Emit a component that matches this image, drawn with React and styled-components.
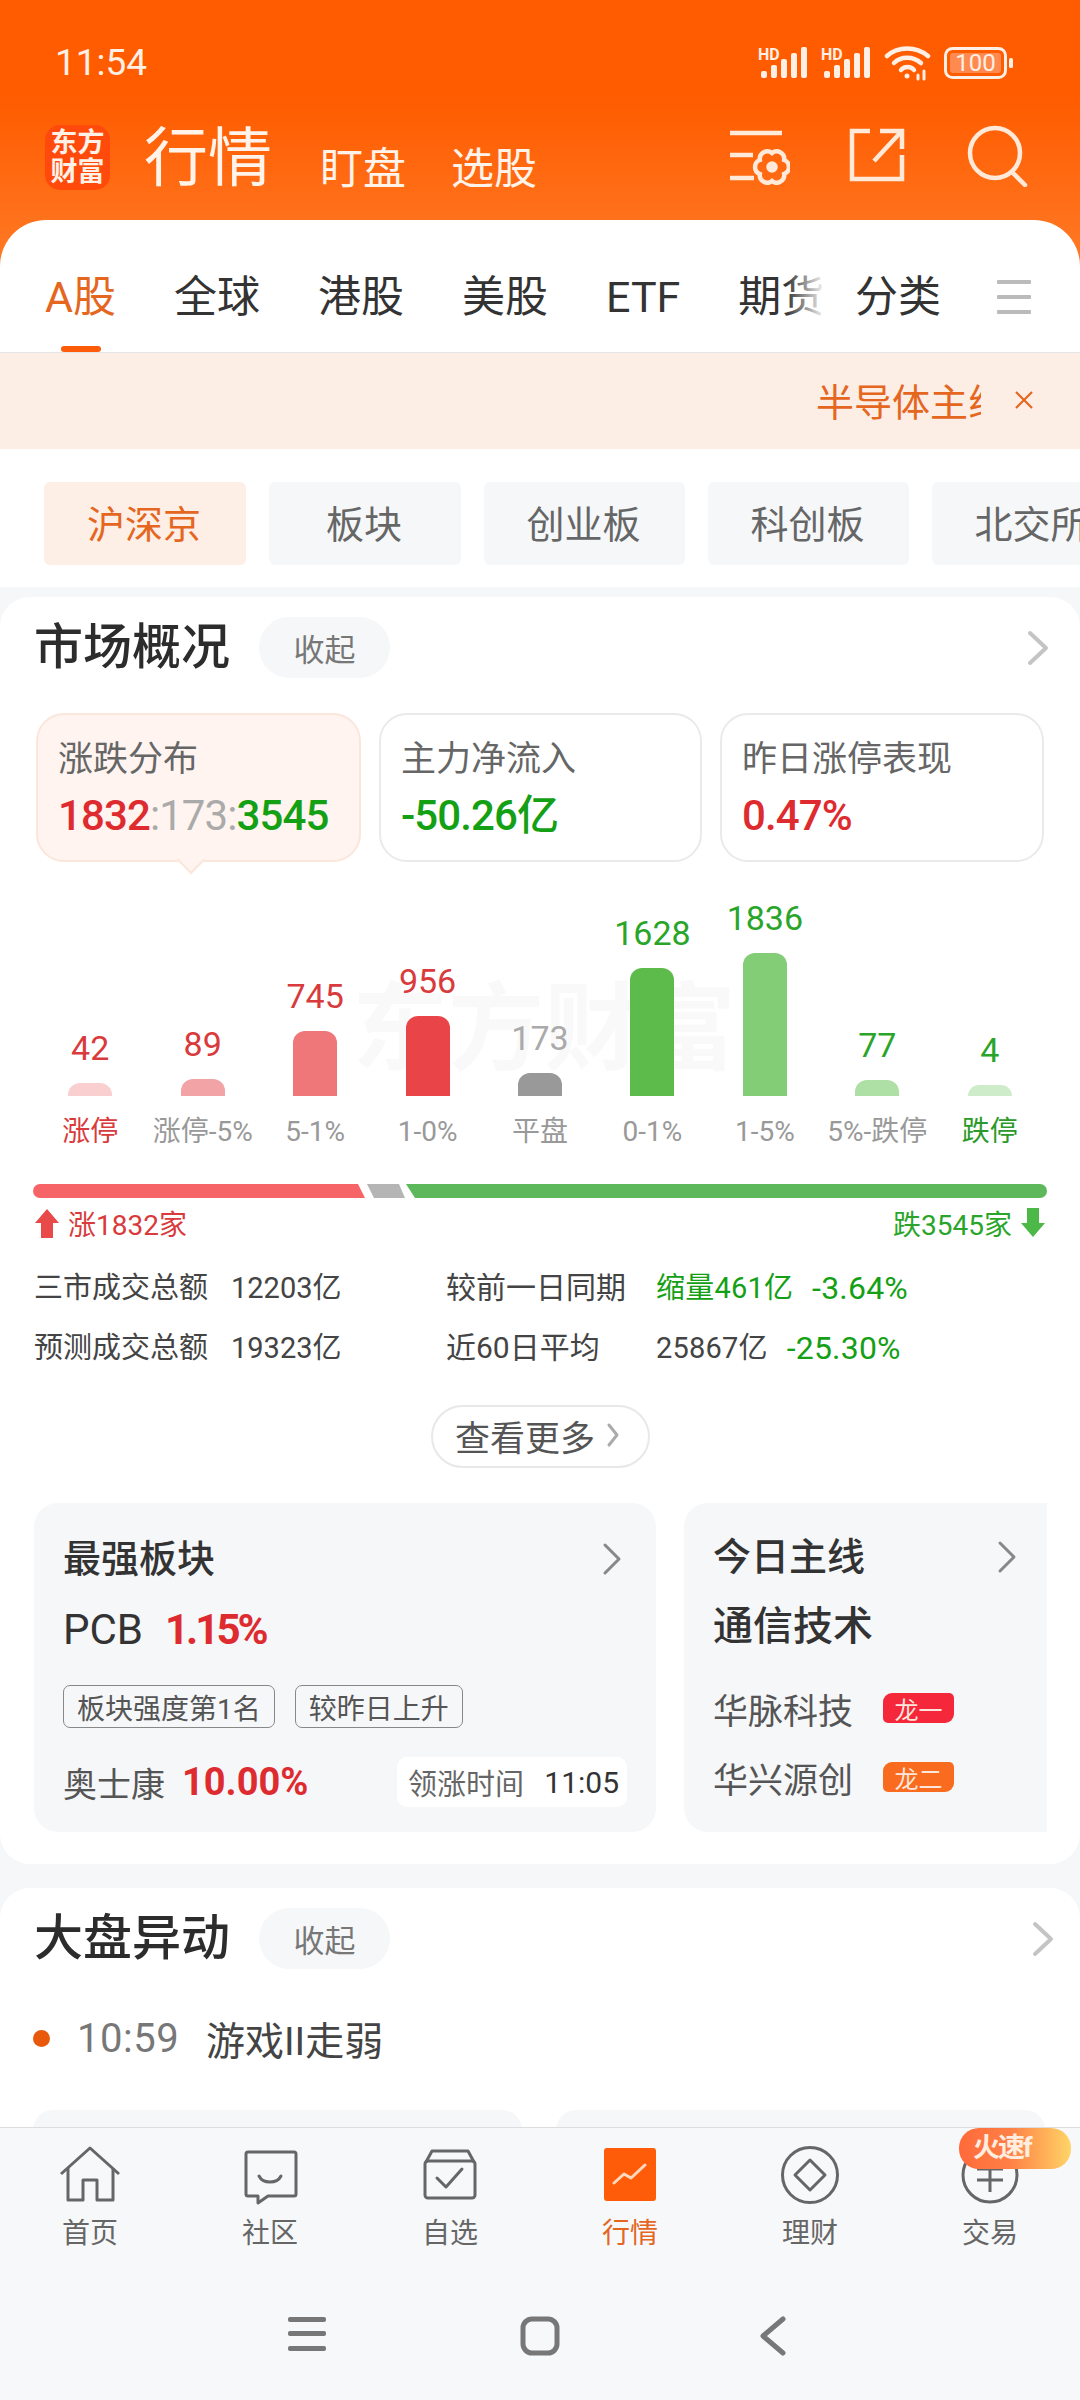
import React from "react";
import styled, { createGlobalStyle } from "styled-components";

const Global = createGlobalStyle`
  html, body { margin: 0; padding: 0; background: #F6F7F9; }
  * { box-sizing: border-box; }
  body { font-family: Roboto, "Noto Sans CJK SC", "Noto Sans", sans-serif; color: #333; }
`;

const RED = "#DE2B2F";
const GREEN = "#14A014";
const ORANGE = "#E4661F";

const Screen = styled.div`
  width: 1080px; height: 2400px; overflow: hidden; display: flex; flex-direction: column;
  background: linear-gradient(#FF5B00 0, #FF5C00 100px, #FF7520 240px, #FF7A26 300px) no-repeat;
  background-size: 100% 300px; background-color: #F6F7F9;
`;
const Main = styled.main`flex: 1; min-height: 0; overflow: hidden;`;

const StatusBar = styled.div`height: 125px; display: flex; align-items: center; justify-content: space-between; padding: 0 66px 0 55px; color: #FFEFE4;`;
const Clock = styled.span`font-size: 37px; font-weight: 400;`;
const StatusIcons = styled.div`display: flex; align-items: center; gap: 12px;`;

const HeaderBar = styled.header`height: 95px; display: flex; align-items: flex-start; padding-left: 45px; color: #FFF3EA;`;
const Logo = styled.div`
  width: 65px; height: 65px; border-radius: 15px; background: #FF4A0C; color: #FFF1E6;
  display: flex; align-items: center; justify-content: center; text-align: center;
  font-size: 27px; line-height: 29px; font-weight: 700; margin-right: 34px;
`;
const PageTitle = styled.h1`margin: 0 48px 0 0; font-size: 64px; line-height: 68px; font-weight: 400;`;
const HeaderLink = styled.span`font-size: 43px; line-height: 48px; margin: 20px 45px 0 0;`;
const HeaderIcons = styled.div`margin-left: auto; display: flex; gap: 56px; padding-right: 50px;`;
const SearchGap = styled.div`margin-left: 4px; display: flex;`;

const TabPanel = styled.section`height: 133px; background: #fff; border-radius: 46px 46px 0 0; border-bottom: 1px solid #E6E6E6; display: flex; align-items: stretch; padding-left: 45px; overflow: hidden;`;
const TabScroller = styled.div`width: 781px; flex: none; display: flex; gap: 58px; overflow: hidden; position: relative;
  &::after { content: ""; position: absolute; right: 0; top: 0; bottom: 0; width: 40px; background: linear-gradient(90deg, rgba(255,255,255,0), #fff); }
`;
const Tab = styled.div`
  flex: none; position: relative; padding-top: 22px; display: flex; align-items: center; font-size: 43px; line-height: 50px;
  color: ${p => (p.$active ? ORANGE : "#333")};
  ${p => p.$active && `&::after { content: ""; position: absolute; left: 16px; right: 15px; bottom: 0; height: 6px; background: #FF5C0A; border-radius: 3px; }`}
`;
const TabExtra = styled(Tab)`margin-left: 29px;`;
const TabMenu = styled.div`margin-left: 56px; padding-top: 22px; display: flex; align-items: center;`;

const Banner = styled.div`height: 96px; background: #FCEDE5; display: flex; align-items: center; justify-content: flex-end; padding: 0 46px 3px 0; gap: 33px;`;
const BannerText = styled.div`width: 165px; overflow: hidden; white-space: nowrap; font-size: 38px; color: ${ORANGE};`;

const ChipRow = styled.div`background: #fff; display: flex; gap: 23px; padding: 33px 0 22px 44px; overflow: hidden;`;
const Chip = styled.div`
  flex: none; width: ${p => p.$w}px; height: 83px; border-radius: 6px; display: flex; align-items: center; justify-content: center; padding: 0 2px 4px 0;
  font-size: 38px; background: ${p => (p.$active ? "#FDEEE6" : "#F6F7F9")}; color: ${p => (p.$active ? ORANGE : "#666")};
`;

const Card = styled.section`background: #fff; border-radius: 30px; margin-top: ${p => p.$mt}px; padding-bottom: ${p => p.$pb || 0}px;`;
const SectionHead = styled.div`display: flex; align-items: center; height: 61px; padding: 0 ${p => p.$pr}px 0 34px;`;
const CardTop = styled.div`padding-top: 20px;`;
const SectionTitle = styled.h2`margin: 0 29px 0 0; font-size: 49px; line-height: 61px; font-weight: 500; color: #2C2C2C;`;
const Pill = styled.span`width: 131px; height: 61px; border-radius: 31px; background: #F6F7F9; color: #777; font-size: 31px; display: flex; align-items: center; justify-content: center;`;
const HeadChevron = styled.div`margin-left: auto; display: flex;`;

const Metrics = styled.div`display: grid; grid-template-columns: 325px 323px 324px; gap: 18px; padding: 35px 0 0 36px;`;
const Metric = styled.div`
  height: 149px; border-radius: 28px; padding: 21px 0 0 20px; position: relative;
  background: ${p => (p.$active ? "#FFF4EF" : "#fff")}; border: 2px solid ${p => (p.$active ? "#FBE6DB" : "#EAEAEA")};
  ${p => p.$active && `&::after { content: ""; position: absolute; left: 143px; bottom: -10px; width: 18px; height: 18px; background: #FFF4EF; border-right: 2px solid #FBE6DB; border-bottom: 2px solid #FBE6DB; transform: rotate(45deg); }`}
`;
const MetricLabel = styled.div`font-size: 35px; line-height: 48px; color: #666;`;
const MetricValue = styled.div`font-size: 42px; line-height: 56px; margin-top: 4px; font-weight: 500; white-space: nowrap; letter-spacing: -0.9px;`;
const Tone = styled.span`color: ${p => p.$c}; font-size: ${p => p.$fs ? `${p.$fs}px` : "inherit"}; font-weight: ${p => p.$fw || "inherit"};`;

const Chart = styled.div`position: relative; height: 234px; display: grid; grid-template-columns: repeat(9, 1fr); align-items: end; padding: 0 34px;`;
const Watermark = styled.div`position: absolute; left: 352px; top: 112px; font-size: 96px; line-height: 110px; font-weight: 700; color: rgba(0,0,0,.022); white-space: nowrap;`;
const BarCol = styled.div`position: relative; display: flex; flex-direction: column; align-items: center;`;
const BarValue = styled.div`font-size: 34px; line-height: 40px; margin-bottom: 15px; color: ${p => p.$c};`;
const Bar = styled.div`width: 44px; border-radius: 12px 12px 0 0; background: ${p => p.$c};`;
const BarLabels = styled.div`display: grid; grid-template-columns: repeat(9, 1fr); padding: 0 34px; margin-top: 16px;`;
const BarLabel = styled.div`text-align: center; font-size: 28px; line-height: 40px; white-space: nowrap; color: ${p => p.$c || "#999"};`;

const Progress = styled.div`display: flex; height: 14px; margin: 32px 33px 0;`;
const Seg = styled.div`height: 14px; width: ${p => p.$w}px; margin-right: ${p => p.$mr || 0}px; background: ${p => p.$c}; clip-path: ${p => p.$clip}; border-radius: ${p => p.$r || "0"};`;
const Legend = styled.div`display: flex; justify-content: space-between; align-items: center; padding: 0 33px; margin-top: 5px; height: 40px; font-size: 28px;`;
const LegendItem = styled.div`display: flex; align-items: center; gap: 7px; color: ${p => p.$c};`;

const Stats = styled.div`margin-top: 25px; padding-left: 34px; display: grid; row-gap: 20px;`;
const StatRow = styled.div`display: grid; grid-template-columns: 197px 215px 210px 1fr; font-size: 29px; line-height: 40px; color: #444; white-space: nowrap;`;
const StatLabel = styled.span`font-size: 30px;`;
const StatTail = styled.div`display: flex; gap: ${p => p.$gap}px; letter-spacing: 0.2px;`;

const MoreWrap = styled.div`display: flex; justify-content: center; margin-top: 37px;`;
const More = styled.div`width: 219px; height: 63px; border-radius: 32px; border: 2px solid #E8E8E8; display: flex; align-items: center; justify-content: center; gap: 10px; font-size: 35px; color: #555; padding: 0 4px 3px 0;`;

const SubRow = styled.div`display: flex; gap: 28px; margin: 35px 33px 0 34px; overflow: hidden;`;
const SubCard = styled.div`flex: none; width: ${p => p.$w}px; height: 329px; background: #F6F7F9; border-radius: ${p => p.$r}; padding: ${p => p.$pt}px 0 0 ${p => p.$pl}px;`;
const SubTitleRow = styled.div`display: flex; justify-content: space-between; align-items: center; padding-right: ${p => p.$pr}px; height: 50px;`;
const SubTitle = styled.div`font-size: ${p => p.$fs || 38}px; line-height: 50px; font-weight: 500; color: #333; margin-top: ${p => p.$mt || 0}px;`;
const SectorRow = styled.div`display: flex; align-items: center; gap: 22px; margin-top: 21px; font-size: 42px; line-height: 50px; color: #333;`;
const StrongPct = styled.span`color: ${RED}; font-weight: 700; letter-spacing: -3px;`;
const TagRow = styled.div`display: flex; gap: 20px; margin-top: 30px;`;
const Tag = styled.span`height: 43px; padding: 0 13px; border: 1px solid #888; border-radius: 7px; font-size: 28px; display: flex; align-items: center; color: #555; white-space: nowrap;`;
const LeadRow = styled.div`display: flex; align-items: center; margin-top: 29px; padding-right: 29px; height: 50px;`;
const LeadName = styled.span`font-size: 34px; color: #555; margin-right: 17px;`;
const LeadPct = styled.span`font-size: 38px; color: ${RED}; font-weight: 700; letter-spacing: 0;`;
const TimePill = styled.div`margin-left: auto; width: 230px; height: 50px; background: #fff; border-radius: 10px; display: flex; align-items: center; justify-content: space-between; padding: 0 8px 0 11px; font-size: 29px; color: #666;`;
const TimeValue = styled.span`color: #333; font-size: 30px;`;
const Dragon = styled.div`display: flex; align-items: center; height: 44px; margin-top: ${p => p.$mt}px; font-size: 35px; color: #555;`;
const DragonName = styled.span`width: 170px;`;
const DragonBadge = styled.span`width: 71px; height: 30px; border-radius: 9px 5px 9px 5px; background: ${p => p.$c}; color: #FFE6DC; font-size: 24px; display: flex; align-items: center; justify-content: center;`;

const Alert = styled.div`display: flex; align-items: center; height: 50px; margin-top: 45px; padding: 0 0 2px 33px;`;
const Dot = styled.span`width: 17px; height: 17px; border-radius: 50%; background: #E8590C; margin-right: 27px;`;
const AlertTime = styled.span`font-size: 40px; color: #777; margin-right: 30px; width: 99px; letter-spacing: 0.5px;`;
const AlertText = styled.span`font-size: 39px; color: #444;`;
const AlertCards = styled.div`display: flex; gap: 34px; margin: 46px 35px 0 33px;`;
const AlertCard = styled.div`flex: 1; height: 120px; border-radius: 20px; background: #F6F7F9;`;

const BottomNav = styled.nav`height: 273px; flex: none; background: #F7F8FA; border-top: 1px solid #DDD; position: relative; padding-top: 17px;`;
const NavGrid = styled.div`display: grid; grid-template-columns: repeat(6, 180px);`;
const NavItem = styled.div`display: flex; flex-direction: column; align-items: center; font-size: 28px; line-height: 40px; color: ${p => (p.$active ? ORANGE : "#666")};`;
const NavIcon = styled.div`height: 60px; margin-bottom: 9px; display: flex;`;
const Flash = styled.div`position: absolute; left: 959px; top: 0; width: 112px; height: 41px; border-radius: 20px; background: linear-gradient(90deg, #FF6A3A, #FF7F45 45%, #FFD467); color: #FFEDE0; font-size: 27px; font-weight: 700; line-height: 41px; padding-left: 14px; letter-spacing: -2px;`;
const SysBar = styled.div`display: flex; justify-content: center; margin-top: 62px;`;
const SysBtn = styled.div`width: 233px; display: flex; justify-content: center;`;

const Chevron = ({ size = 30, h = 34, c = "#BDBDBD", w = 3 }) => (
  <svg width={size} height={h} viewBox={`0 0 ${size} ${h}`} fill="none">
    <path d={`M${size * 0.25} 3 L${size * 0.75} ${h / 2} L${size * 0.25} ${h - 3}`} stroke={c} strokeWidth={w} strokeLinecap="round" strokeLinejoin="round" />
  </svg>
);
const HeadArrow = () => (
  <svg width="22" height="38" viewBox="0 0 22 38" fill="none"><path d="M3 4L19 19L3 34" stroke="#C4C4C4" strokeWidth="4" strokeLinecap="round" strokeLinejoin="round" /></svg>
);

const Signal = () => (
  <svg width="52" height="34" viewBox="0 0 52 34" fill="#FFEFE4" style={{ marginRight: -1 }}>
    <text x="0" y="14" fontSize="16" fontWeight="700" fontFamily="Roboto, sans-serif">HD</text>
    <rect x="3" y="25" width="6" height="7" rx="2" />
    <rect x="13" y="19" width="6" height="13" rx="2" />
    <rect x="23" y="13" width="6" height="19" rx="2" />
    <rect x="33" y="7" width="6" height="25" rx="2" />
    <rect x="43" y="1" width="6" height="31" rx="2" />
  </svg>
);
const Wifi = () => (
  <svg width="48" height="36" viewBox="0 0 48 36" fill="none" stroke="#FFEFE4" strokeWidth="4.5" strokeLinecap="round">
    <path d="M3 11 C14 1 32 1 44 11" />
    <path d="M10 18 C17 11 29 11 37 18" />
    <path d="M17 25 C20 21 27 21 30 25" />
    <circle cx="23" cy="31" r="2.5" fill="#FFEFE4" stroke="none" />
    <path d="M34 30v4M40 26v8" strokeWidth="3" />
  </svg>
);
const Battery = () => (
  <svg width="70" height="32" viewBox="0 0 70 32">
    <rect x="1.5" y="1.5" width="60" height="29" rx="7" fill="none" stroke="#FFEFE4" strokeWidth="3" />
    <rect x="6" y="6" width="51" height="20" rx="3" fill="#FF8A50" />
    <rect x="65" y="11" width="4" height="10" rx="1.5" fill="#FFEFE4" />
    <text x="31.5" y="24" textAnchor="middle" fontSize="24" fill="#FFEFE4" fontFamily="Roboto, sans-serif">100</text>
  </svg>
);

const flowerPath = (cx, cy, r, lobe) => {
  const pts = Array.from({ length: 6 }, (_, i) => {
    const a = (Math.PI / 3) * i + Math.PI / 6;
    return [cx + r * Math.cos(a), cy + r * Math.sin(a)];
  });
  return `M${pts[0][0]} ${pts[0][1]} ` + pts.slice(1).concat([pts[0]]).map(p => `A${lobe} ${lobe} 0 0 1 ${p[0]} ${p[1]}`).join(" ") + "Z";
};
const FilterIcon = () => (
  <svg width="64" height="60" viewBox="0 0 64 60" fill="none" stroke="#FFEAD9" strokeWidth="4.5">
    <path d="M4 8h52M4 30h23M4 53h24" />
    <path d={flowerPath(46, 42, 14, 7.5)} />
    <circle cx="46" cy="42" r="3.5" fill="#FFEAD9" />
  </svg>
);
const ShareIcon = () => (
  <svg width="60" height="60" viewBox="0 0 60 60" fill="none" stroke="#FFEAD9" strokeWidth="4.5">
    <path d="M24 6H6V54H56V30" />
    <path d="M34 6H56V24" />
    <path d="M54 8L28 36" />
  </svg>
);
const SearchIcon = () => (
  <svg width="64" height="62" viewBox="0 0 64 62" fill="none" stroke="#FFEAD9" strokeWidth="4.5">
    <circle cx="29" cy="28" r="25" />
    <path d="M46 47L59 60" strokeLinecap="round" />
  </svg>
);

const IconHome = () => (
  <svg width="60" height="60" viewBox="0 0 60 60" fill="none" stroke="#666" strokeWidth="3" strokeLinejoin="round">
    <path d="M1 29L30 3L59 29" /><path d="M8 23V55H23V35H37V55H53V23" />
  </svg>
);
const IconChat = () => (
  <svg width="60" height="60" viewBox="0 0 60 60" fill="none" stroke="#666" strokeWidth="3" strokeLinejoin="round">
    <path d="M8 7H54a2 2 0 0 1 2 2V49a2 2 0 0 1-2 2H28L18 58V51H8a2 2 0 0 1-2-2V9a2 2 0 0 1 2-2z" />
    <path d="M19 31C23 39 37 39 41 31" strokeLinecap="round" />
  </svg>
);
const IconWatch = () => (
  <svg width="60" height="60" viewBox="0 0 60 60" fill="none" stroke="#666" strokeWidth="3" strokeLinejoin="round">
    <path d="M6 17L12 6H48L54 17" />
    <rect x="5" y="16" width="50" height="37" rx="3" />
    <path d="M17 33L26 42L42 24" strokeLinecap="round" />
  </svg>
);
const IconMarket = () => (
  <svg width="60" height="60" viewBox="0 0 60 60" fill="none">
    <rect x="4" y="3" width="52" height="53" rx="3" fill="#FF5C0A" />
    <path d="M14 38L24 29L31 33L45 20" stroke="#FFD9BF" strokeWidth="3" strokeLinecap="round" strokeLinejoin="round" />
  </svg>
);
const IconWealth = () => (
  <svg width="60" height="60" viewBox="0 0 60 60" fill="none" stroke="#666" strokeWidth="3">
    <circle cx="30" cy="30" r="27.5" />
    <path d="M30 15L45 30L30 45L15 30Z" strokeLinejoin="round" />
  </svg>
);
const IconTrade = () => (
  <svg width="60" height="60" viewBox="0 0 60 60" fill="none" stroke="#666" strokeWidth="3">
    <circle cx="30" cy="30" r="27" />
    <path d="M17 24H43M17 35H43M30 24V47" />
  </svg>
);

const bars = [
  { v: "42", h: 13, c: "#F9CFD0", t: "#D93A3C", l: "涨停", lc: "#D93A3C" },
  { v: "89", h: 17, c: "#F2A3A5", t: "#D93A3C", l: "涨停-5%" },
  { v: "745", h: 65, c: "#EF7679", t: "#D93A3C", l: "5-1%" },
  { v: "956", h: 80, c: "#E94549", t: "#D93A3C", l: "1-0%" },
  { v: "173", h: 23, c: "#999999", t: "#AAAAAA", l: "平盘" },
  { v: "1628", h: 128, c: "#5DBB4B", t: "#2AA52A", l: "0-1%" },
  { v: "1836", h: 143, c: "#83CD76", t: "#2AA52A", l: "1-5%" },
  { v: "77", h: 16, c: "#AEDFA5", t: "#2AA52A", l: "5%-跌停" },
  { v: "4", h: 11, c: "#CFECCA", t: "#2AA52A", l: "跌停", lc: "#2A9A2A" },
];
const navs = [
  ["首页", <IconHome />], ["社区", <IconChat />], ["自选", <IconWatch />],
  ["行情", <IconMarket />, true], ["理财", <IconWealth />], ["交易", <IconTrade />],
];

export default function App() {
  return (
    <Screen>
      <Global />
      <Main>
        <StatusBar>
          <Clock>11:54</Clock>
          <StatusIcons><Signal /><Signal /><Wifi /><Battery /></StatusIcons>
        </StatusBar>
        <HeaderBar>
          <Logo>东方<br />财富</Logo>
          <PageTitle>行情</PageTitle>
          <HeaderLink>盯盘</HeaderLink>
          <HeaderLink>选股</HeaderLink>
          <HeaderIcons><FilterIcon /><ShareIcon /><SearchGap><SearchIcon /></SearchGap></HeaderIcons>
        </HeaderBar>
        <TabPanel>
          <TabScroller>
            <Tab $active>A股</Tab><Tab>全球</Tab><Tab>港股</Tab><Tab>美股</Tab><Tab>ETF</Tab><Tab>期货</Tab>
          </TabScroller>
          <TabExtra>分类</TabExtra>
          <TabMenu>
            <svg width="34" height="36" viewBox="0 0 34 36" fill="#BBB"><rect width="34" height="4" rx="1" y="1" /><rect width="34" height="4" rx="1" y="16" /><rect width="34" height="4" rx="1" y="31" /></svg>
          </TabMenu>
        </TabPanel>
        <Banner>
          <BannerText>半导体主线</BannerText>
          <svg width="20" height="20" viewBox="0 0 20 20" stroke={ORANGE} strokeWidth="2.2"><path d="M2 2L18 18M18 2L2 18" /></svg>
        </Banner>
        <ChipRow>
          <Chip $w={202} $active>沪深京</Chip>
          <Chip $w={192}>板块</Chip>
          <Chip $w={201}>创业板</Chip>
          <Chip $w={201}>科创板</Chip>
          <Chip $w={201}>北交所</Chip>
        </ChipRow>
        <Card $mt={10} $pb={32}>
          <CardTop>
            <SectionHead $pr={31}>
              <SectionTitle>市场概况</SectionTitle>
              <Pill>收起</Pill>
              <HeadChevron><HeadArrow /></HeadChevron>
            </SectionHead>
          </CardTop>
          <Metrics>
            <Metric $active>
              <MetricLabel>涨跌分布</MetricLabel>
              <MetricValue><Tone $c={RED}>1832</Tone><Tone $c="#AAA" $fw={400}>:173:</Tone><Tone $c={GREEN}>3545</Tone></MetricValue>
            </Metric>
            <Metric>
              <MetricLabel>主力净流入</MetricLabel>
              <MetricValue><Tone $c={GREEN}>-50.26亿</Tone></MetricValue>
            </Metric>
            <Metric>
              <MetricLabel>昨日涨停表现</MetricLabel>
              <MetricValue><Tone $c={RED}>0.47%</Tone></MetricValue>
            </Metric>
          </Metrics>
          <Chart>
            <Watermark>东方财富</Watermark>
            {bars.map(b => (
              <BarCol key={b.l}>
                <BarValue $c={b.t}>{b.v}</BarValue>
                <Bar $c={b.c} style={{ height: b.h }} />
              </BarCol>
            ))}
          </Chart>
          <BarLabels>
            {bars.map(b => <BarLabel key={b.l} $c={b.lc}>{b.l}</BarLabel>)}
          </BarLabels>
          <Progress>
            <Seg $w={332} $mr={2} $c="#F66467" $r="7px 0 0 7px" $clip="polygon(0 0, 325px 0, 100% 100%, 0 100%)" />
            <Seg $w={38} $mr={1} $c="#B5B5B5" $clip="polygon(0 0, 32px 0, 100% 100%, 7px 100%)" />
            <Seg $w={641} $c="#5CB85A" $r="0 7px 7px 0" $clip="polygon(0 0, 100% 0, 100% 100%, 9px 100%)" />
          </Progress>
          <Legend>
            <LegendItem $c="#D93A3C">
              <svg width="28" height="32" viewBox="0 0 28 32" fill="#E84A4A"><path d="M14 2L26 16H20V31H8V16H2Z" /></svg>
              涨1832家
            </LegendItem>
            <LegendItem $c="#2AA52A">
              跌3545家
              <svg width="28" height="32" viewBox="0 0 28 32" fill="#4CB848"><path d="M14 30L26 16H20V1H8V16H2Z" /></svg>
            </LegendItem>
          </Legend>
          <Stats>
            <StatRow>
              <span>三市成交总额</span><span>12203亿</span><StatLabel>较前一日同期</StatLabel>
              <StatTail $gap={19}><Tone $c={GREEN}>缩量461亿</Tone><Tone $c={GREEN} $fs={32}>-3.64%</Tone></StatTail>
            </StatRow>
            <StatRow>
              <span>预测成交总额</span><span>19323亿</span><StatLabel>近60日平均</StatLabel>
              <StatTail $gap={19}><span>25867亿</span><Tone $c={GREEN} $fs={32}>-25.30%</Tone></StatTail>
            </StatRow>
          </Stats>
          <MoreWrap>
            <More>查看更多<Chevron size={16} h={26} c="#AAA" /></More>
          </MoreWrap>
          <SubRow>
            <SubCard $w={622} $r="24px" $pt={31} $pl={29}>
              <SubTitleRow $pr={30}>
                <SubTitle>最强板块</SubTitle>
                <Chevron size={28} h={34} c="#888" />
              </SubTitleRow>
              <SectorRow>PCB<StrongPct>1.15%</StrongPct></SectorRow>
              <TagRow><Tag>板块强度第1名</Tag><Tag>较昨日上升</Tag></TagRow>
              <LeadRow>
                <LeadName>奥士康</LeadName>
                <LeadPct>10.00%</LeadPct>
                <TimePill>领涨时间<TimeValue>11:05</TimeValue></TimePill>
              </LeadRow>
            </SubCard>
            <SubCard $w={363} $r="24px 0 0 24px" $pt={29} $pl={29}>
              <SubTitleRow $pr={26}>
                <SubTitle>今日主线</SubTitle>
                <Chevron size={28} h={34} c="#888" />
              </SubTitleRow>
              <SubTitle $mt={20} $fs={40}>通信技术</SubTitle>
              <Dragon $mt={34}><DragonName>华脉科技</DragonName><DragonBadge $c="#F5273A">龙一</DragonBadge></Dragon>
              <Dragon $mt={25}><DragonName>华兴源创</DragonName><DragonBadge $c="#F96B1E">龙二</DragonBadge></Dragon>
            </SubCard>
          </SubRow>
        </Card>
        <Card $mt={24} $pb={40}>
          <CardTop>
            <SectionHead $pr={26}>
              <SectionTitle>大盘异动</SectionTitle>
              <Pill>收起</Pill>
              <HeadChevron><HeadArrow /></HeadChevron>
            </SectionHead>
          </CardTop>
          <Alert><Dot /><AlertTime>10:59</AlertTime><AlertText>游戏II走弱</AlertText></Alert>
          <AlertCards><AlertCard /><AlertCard /></AlertCards>
        </Card>
      </Main>
      <BottomNav>
        <NavGrid>
          {navs.map(([label, icon, active]) => (
            <NavItem key={label} $active={active}><NavIcon>{icon}</NavIcon>{label}</NavItem>
          ))}
        </NavGrid>
        <Flash>火速f</Flash>
        <SysBar>
          <SysBtn>
            <svg width="38" height="36" viewBox="0 0 38 36" fill="#777"><rect width="38" height="5" y="1" rx="2" /><rect width="38" height="5" y="15" rx="2" /><rect width="38" height="5" y="30" rx="2" /></svg>
          </SysBtn>
          <SysBtn>
            <svg width="40" height="40" viewBox="0 0 40 40" fill="none" stroke="#777" strokeWidth="5"><rect x="3" y="3" width="34" height="34" rx="9" /></svg>
          </SysBtn>
          <SysBtn>
            <svg width="26" height="40" viewBox="0 0 26 40" fill="none" stroke="#777" strokeWidth="5" strokeLinecap="round" strokeLinejoin="round"><path d="M23 3L3 20L23 37" /></svg>
          </SysBtn>
        </SysBar>
      </BottomNav>
    </Screen>
  );
}
